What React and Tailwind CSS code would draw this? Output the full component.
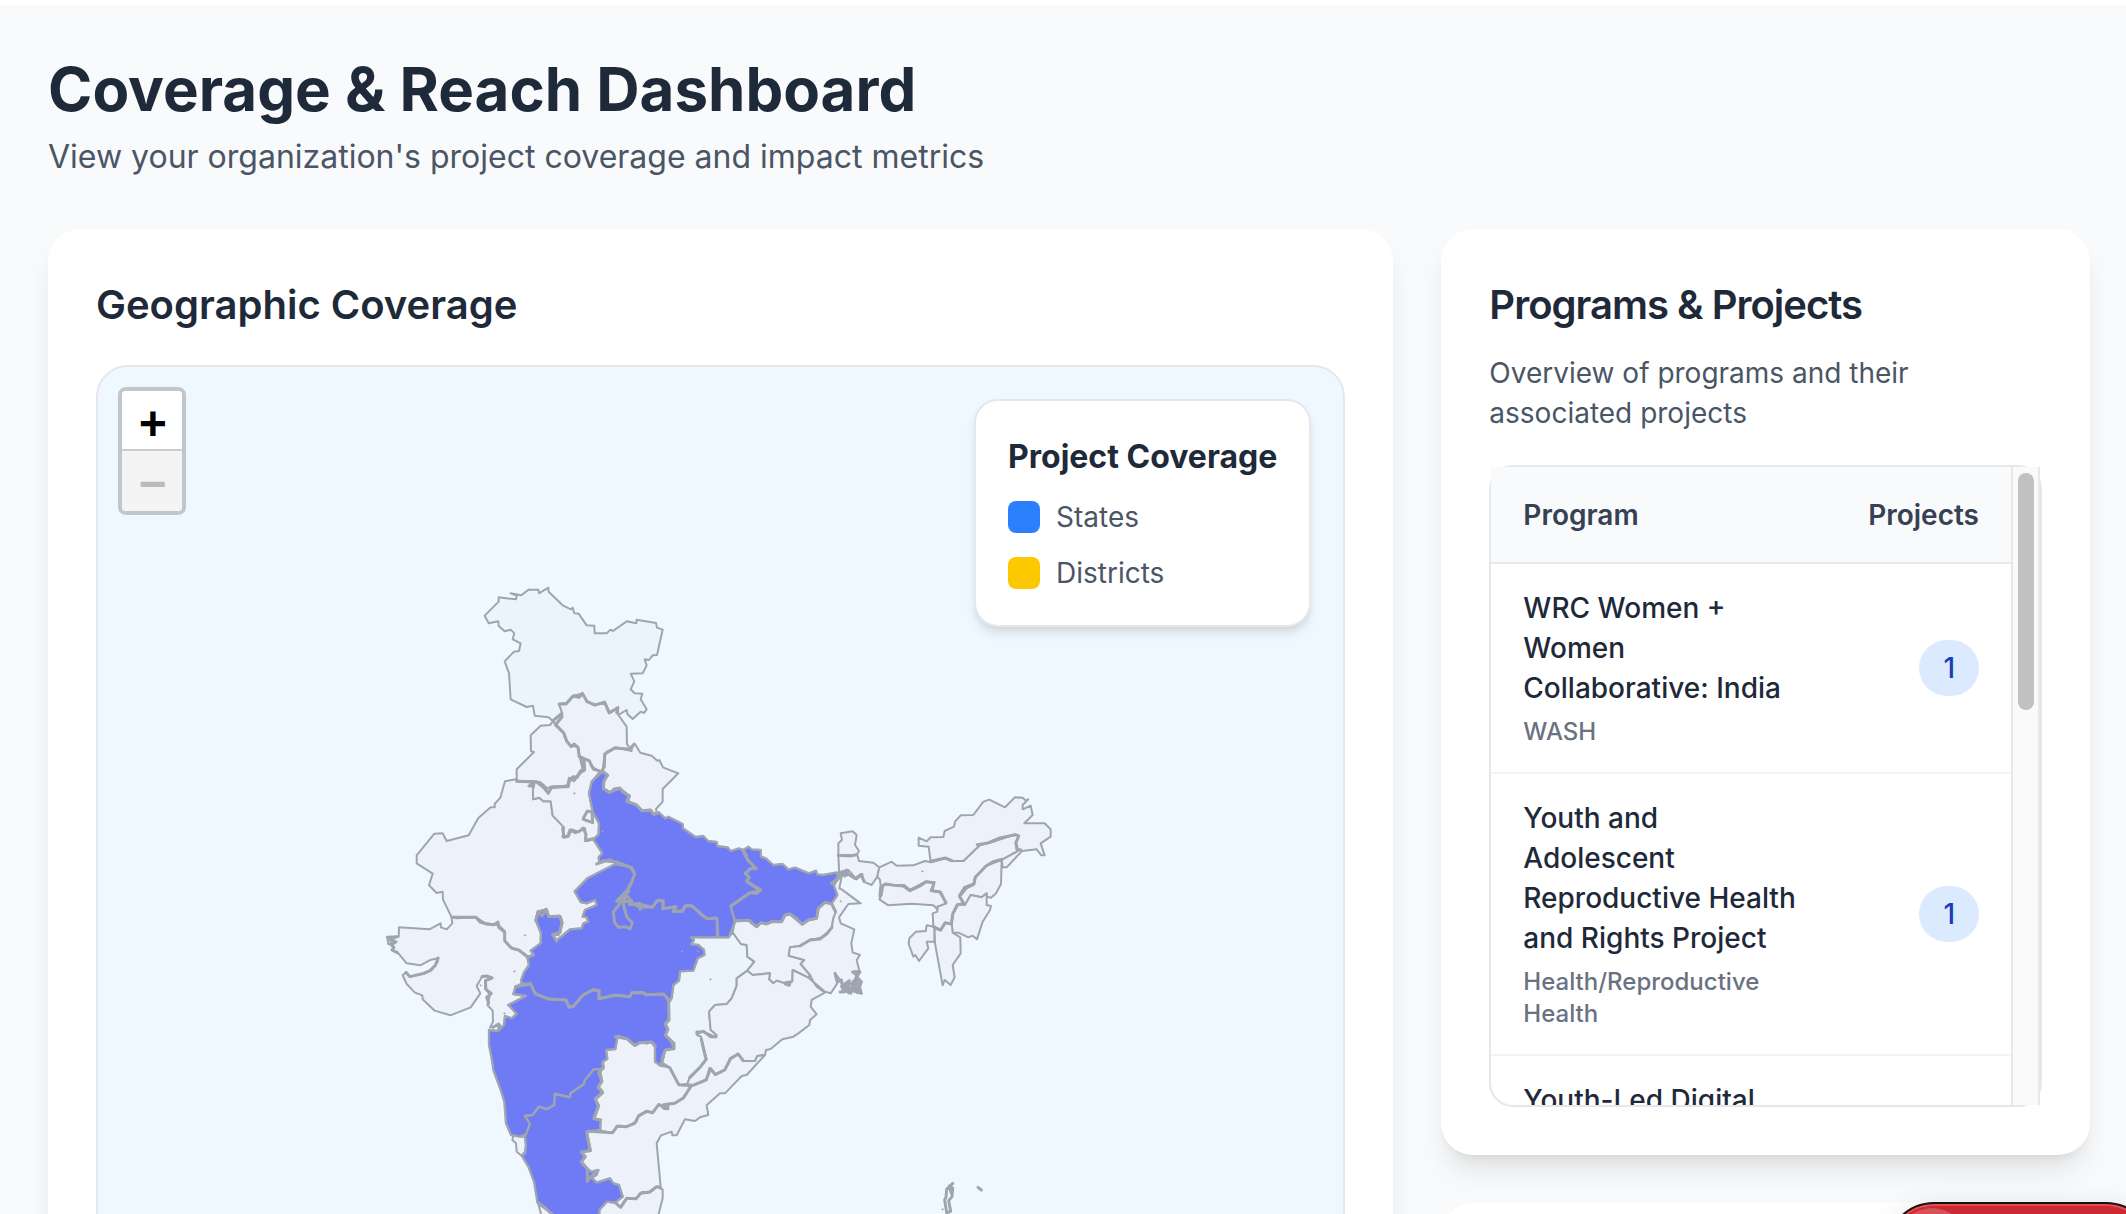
import { useState } from 'react'
import clsx from 'clsx'

// Every outline is drawn in its own sheet; `at` places that sheet on the map
const NORTH = [270, 0]
const WEST = [0, 510]
const CENTRE = [570, 510]
const EAST = [1350, 630]
const SOUTH = [300, 1230]
const ISLANDS = [1590, 1590]

const STATES = [
  { id: 'jammu-kashmir', at: NORTH, tint: true, points: '74,137 116,95 116,82 168,88 170,77 152,70 184,76 206,59 235,59 237,70 265,53 266,65 308,106 333,118 338,113 343,130 356,131 380,166 403,167 404,190 440,190 451,179 459,183 500,154 529,160 530,149 588,159 591,173 608,179 591,255 578,256 567,270 554,268 560,286 548,310 512,311 523,334 512,358 524,370 547,371 542,388 560,418 552,429 542,425 518,447 502,432 500,420 473,436 474,413 449,430 434,395 404,406 381,393 367,372 339,377 318,400 297,402 307,430 279,454 266,442 224,437 219,407 200,411 152,388 147,310 134,274 162,245 177,243 182,220 158,208 163,190 152,179 134,184 116,168 115,154 86,160' },
  { id: 'himachal', at: NORTH, points: '297,402 318,400 339,377 367,372 381,393 404,406 434,395 449,430 474,413 473,432 500,470 501,522 513,540 465,535 440,545 434,555 431,595 424,605 400,595 388,575 370,565 358,558 354,530 330,527 312,498 312,488 288,465 304,445 307,430' },
  { id: 'punjab', at: NORTH, points: '279,454 270,465 242,467 212,496 213,544 222,546 170,598 170,633 240,636 262,655 273,650 322,650 328,628 350,620 362,600 372,600 374,590 370,565 358,558 354,530 330,527 312,498 312,488 288,465' },
  { id: 'rajasthan', at: WEST, points: '440,117 405,124 391,173 374,192 374,202 362,202 325,234 296,286 230,303 218,280 193,281 140,346 140,370 188,401 177,436 200,459 218,455 219,479 244,530 260,535 318,532 345,550 385,555 405,575 405,603 425,625 450,632 475,650 492,645 482,632 512,610 513,580 497,540 503,515 530,508 537,530 572,530 577,550 565,585 548,583 558,603 600,568 635,565 640,550 655,545 650,532 638,530 645,510 680,495 675,480 650,490 632,486 614,454 652,415 735,375 735,362 686,352 697,340 670,298 650,303 645,265 625,275 605,268 595,290 578,290 582,262 548,227 542,184 520,184 508,173 489,178 489,140 500,125 440,122' },
  { id: 'haryana', at: WEST, points: '440,122 500,125 520,135 535,158 548,140 595,142 600,115 620,110 640,90 632,52 658,62 665,80 690,95 665,125 657,160 668,215 687,250 686,283 670,298 650,303 645,265 625,275 605,268 595,290 578,290 582,262 548,227 542,184 520,184 508,173 489,178 489,140 475,138 490,128' },
  { id: 'gujarat', at: WEST, points: '244,530 247,550 230,568 213,562 212,550 178,568 87,562 86,590 52,592 55,612 68,608 70,632 85,640 110,670 151,676 183,659 205,655 203,665 185,690 160,702 118,710 108,697 98,706 110,732 135,758 157,766 158,778 194,812 241,826 302,802 331,760 320,738 338,707 367,713 345,722 345,745 360,765 352,795 368,812 369,845 360,863 385,855 385,873 402,855 405,828 425,835 440,822 435,805 415,795 468,768 430,762 437,740 458,735 453,722 462,697 477,675 472,652 450,632 425,625 405,603 405,575 385,555 345,550 318,532 260,535' },
  { id: 'chhattisgarh', at: SOUTH, tint: true, points: '605,55 610,15 627,2 630,-26 670,-28 683,-65 703,-75 702,-90 685,-105 663,-107 672,-120 663,-128 776,-128 788,-143 813,-108 830,-105 832,-70 853,-55 832,-28 800,-5 800,18 785,55 770,72 735,75 717,95 722,150 740,165 738,172 700,155 680,155 682,165 693,170 710,238 690,262 660,290 652,312 628,315 610,285 598,262 570,257 580,235 585,210 612,205 600,180 587,165 593,145 585,130 597,120 595,70' },
  { id: 'uttarakhand', at: CENTRE, points: '128,92 133,50 140,38 165,22 215,33 213,20 225,12 241,38 275,47 292,62 298,60 309,82 355,100 308,147 308,185 288,207 290,220 280,222 272,210 245,212 232,197 205,185 208,168 180,145 150,157 130,145 132,122 144,105' },
  { id: 'jharkhand', at: CENTRE, points: '525,543 567,540 590,560 603,548 620,552 635,545 665,545 675,525 690,522 705,530 727,553 745,540 770,535 775,505 795,487 815,490 828,515 820,535 815,565 800,580 780,595 750,600 720,618 690,622 686,647 733,660 722,672 750,705 745,713 698,690 697,725 680,732 650,722 640,730 627,718 630,700 578,705 562,692 583,665 562,650 560,615 543,612 518,577' },
  { id: 'odisha', at: SOUTH, points: '800,-5 832,-28 848,-15 900,-20 897,-2 910,10 920,2 950,12 967,5 968,-30 1015,-7 1030,5 1040,20 1065,38 1025,60 1022,80 1040,103 1020,120 1018,135 985,160 970,170 937,178 902,207 888,210 885,225 862,228 855,243 818,243 805,222 780,235 765,270 735,283 718,265 710,300 665,318 652,312 660,290 690,262 710,238 693,170 682,165 680,155 700,155 738,172 740,165 722,150 717,95 735,75 770,72 785,55 800,18' },
  { id: 'west-bengal', at: EAST, points: '55,225 112,225 117,243 160,248 178,262 172,290 155,315 130,305 127,282 110,298 85,270 65,290 58,325 65,328 122,370 85,372 57,412 62,430 103,448 94,490 98,517 120,525 110,540 118,572 98,575 112,590 125,605 108,620 125,640 95,625 85,640 65,605 45,580 52,610 32,640 15,635 -20,605 -30,585 -58,552 -47,540 -94,527 -90,502 -60,498 -30,480 0,475 20,460 35,445 40,415 48,395 35,370 52,345 40,320 58,290' },
  { id: 'sikkim', at: EAST, points: '55,225 55,190 66,180 62,160 98,154 110,165 105,195 117,213 110,225' },
  { id: 'assam', at: EAST, points: '178,262 215,245 230,257 280,256 315,243 332,247 375,235 395,243 430,243 480,195 520,185 585,163 597,167 587,190 590,208 603,208 545,240 500,257 465,292 460,315 440,325 420,350 430,370 415,372 400,400 395,432 375,428 362,452 348,445 340,437 338,400 352,395 352,380 378,370 362,335 332,333 343,307 318,305 270,330 252,315 190,315 185,345 180,300 172,290' },
  { id: 'arunachal', at: EAST, points: '332,247 326,200 296,197 296,173 320,184 332,172 370,171 374,153 402,140 405,125 422,106 460,105 490,65 508,59 555,82 585,52 608,53 618,62 625,58 608,75 608,88 632,77 638,105 613,130 674,130 692,148 692,170 662,190 674,226 664,226 650,208 606,213 560,262 548,262 545,240 603,208 590,208 587,190 597,167 585,163 520,185 480,195 430,243 395,243 375,235' },
  { id: 'nagaland', at: EAST, points: '545,240 543,312 528,340 513,353 500,350 500,340 485,352 452,345 435,375 420,350 440,325 460,315 465,292 500,257' },
  { id: 'manipur', at: EAST, points: '452,345 485,352 500,340 500,375 513,378 510,390 488,425 471,478 458,467 445,472 415,458 398,458 395,432 400,400 415,372 435,375' },
  { id: 'mizoram', at: EAST, points: '343,445 362,452 375,428 395,432 398,458 421,472 422,520 398,555 404,592 392,615 374,600 368,616 345,490' },
  { id: 'tripura', at: EAST, points: '343,440 320,436 317,453 288,455 268,475 266,492 280,530 286,525 297,543 325,505 320,485 343,485' },
  { id: 'meghalaya', at: EAST, points: '185,345 178,358 205,376 275,371 340,376 352,388 352,380 378,370 362,335 332,333 343,307 318,305 270,330 252,315 190,315' },
  { id: 'telangana', at: SOUTH, points: '443,168 470,175 495,197 510,187 530,190 545,185 555,195 555,245 570,257 598,262 610,285 628,315 665,318 640,355 615,370 595,372 595,387 582,387 567,372 548,398 530,393 505,407 500,425 470,440 440,440 428,458 392,453 390,420 370,415 385,375 375,355 398,335 385,320 395,300 390,268 400,262 398,245 412,237 408,210 436,207' },
  { id: 'andhra', at: SOUTH, points: '665,318 710,300 718,265 735,283 765,270 780,235 805,222 818,243 855,243 862,228 885,225 830,285 815,288 765,340 750,340 710,376 715,405 690,412 675,423 645,418 620,466 607,466 605,455 573,466 560,490 572,620 560,620 535,638 515,637 498,657 470,655 450,682 435,668 458,650 447,615 430,610 420,595 380,608 365,593 360,603 350,603 345,575 350,565 333,545 345,530 335,515 362,512 350,455 392,453 428,458 440,440 470,440 500,425 505,407 530,393 548,398 567,372 582,387 595,387 595,372 615,370 640,355' },
  { id: 'goa', at: SOUTH, points: '130,465 150,470 165,470 168,495 165,515 155,527 140,515 138,490 127,480' },
  { id: 'kerala', at: SOUTH, points: '205,672 225,685 245,700 290,760 320,860 350,940 340,1050 300,960 250,800 215,710' },
  { id: 'tamil-nadu', at: SOUTH, points: '388,690 410,665 435,668 450,682 470,655 498,657 515,637 535,638 560,620 578,628 578,655 565,705 570,780 540,880 470,940 440,1020 350,1060 340,1050 350,940 320,860 290,760 388,720' },
  { id: 'uttar-pradesh', at: CENTRE, covered: true, points: '128,95 144,105 132,122 130,145 150,157 180,145 208,168 205,185 232,197 245,212 272,210 280,222 297,218 316,235 325,230 368,252 369,265 407,291 430,288 445,303 470,306 472,318 503,322 512,333 537,325 550,330 560,345 562,360 590,385 572,385 555,400 567,410 560,425 600,452 570,457 512,498 525,545 515,570 506,592 475,592 471,535 440,535 395,497 375,497 365,514 340,515 345,500 310,505 308,482 295,480 275,502 240,502 215,490 205,470 172,480 207,455 205,440 215,425 224,400 215,382 165,368 150,358 118,370 116,352 127,340 100,298 116,283 117,250 98,215 87,160 95,125' },
  { id: 'madhya-pradesh', at: CENTRE, covered: true, points: '165,372 82,415 44,454 62,486 80,490 105,480 110,495 75,510 68,530 80,532 85,545 70,550 65,565 30,568 -12,603 -22,583 -5,585 7,550 2,530 -33,530 -40,508 -67,515 -73,540 -57,580 -58,610 -88,632 -78,645 -98,652 -93,675 -108,697 -117,722 -112,735 -90,730 -75,760 -35,778 18,780 27,800 40,800 70,765 100,748 118,752 115,775 165,765 210,770 215,758 245,758 255,765 310,765 325,780 335,775 340,735 357,722 360,694 400,692 413,655 433,645 432,630 415,615 393,613 402,600 393,592 471,592 471,535 440,535 395,497 375,497 365,514 340,515 345,500 310,505 308,482 295,480 275,502 240,502 215,490 205,470 172,480 207,455 205,440 215,425 224,400 215,382' },
  { id: 'bihar', at: CENTRE, covered: true, points: '550,330 565,320 575,328 602,330 603,350 618,355 640,375 668,372 685,388 705,383 747,400 768,392 772,403 790,405 830,397 840,412 820,432 832,465 815,490 795,487 775,505 770,535 745,540 727,553 705,530 690,522 675,525 665,545 635,545 620,552 603,548 590,560 567,540 525,543 512,498 570,457 600,452 560,425 567,410 555,400 572,385 590,385 562,360 560,345' },
  { id: 'maharashtra', at: SOUTH, covered: true, points: '153,12 180,10 195,40 235,58 288,60 297,80 310,80 340,45 370,28 388,32 385,55 435,45 480,50 485,38 515,36 525,45 580,42 595,62 597,120 585,130 593,145 587,165 600,180 612,205 585,210 580,235 570,255 555,245 555,195 545,185 530,190 510,187 495,197 470,175 443,168 436,207 408,210 412,237 398,245 400,262 390,268 372,268 345,300 342,312 302,340 300,352 255,342 253,375 230,388 207,380 188,405 165,408 180,432 170,462 150,470 123,465 108,430 103,365 92,330 70,270 65,235 57,195 57,150 85,153 102,135 105,108 125,115 140,102 115,75 168,48 130,42 137,20' },
  { id: 'karnataka', at: SOUTH, covered: true, points: '165,408 188,405 207,380 230,388 253,375 255,342 300,352 302,340 342,312 345,300 372,268 390,268 395,300 385,320 398,335 375,355 385,375 370,415 392,420 390,450 350,455 362,512 335,515 345,530 333,545 350,565 365,575 385,570 380,585 365,593 380,608 420,595 430,610 447,615 458,650 435,668 410,665 388,690 388,720 290,760 245,700 225,685 202,665 192,605 175,560 155,527 165,520 168,495 165,470 180,432' },
]

const HEAVY_BORDERS = [
  { at: NORTH, points: '297,402 318,402 339,379 358,382 367,370 375,384 381,395 404,405 434,397 447,428 462,420 474,413 470,428' },
  { at: NORTH, points: '279,452 305,430 306,440 286,464 312,490 320,514 334,530 342,522 354,532 358,560 372,568 374,600 362,604 352,622 340,620 326,634 324,646 312,650 273,652' },
  { at: NORTH, points: '358,560 388,573 400,597 424,605 433,590 434,552 465,534 512,538 522,522' },
  { at: WEST, points: '440,124 500,126 520,142 535,160 545,142 595,138 598,115 612,122 628,100 640,92 632,56' },
  { at: WEST, points: '478,138 492,130 490,142' },
  { at: WEST, points: '578,265 582,292 594,288 600,270 616,278 628,274 640,264 648,284 646,302 668,296' },
  { at: WEST, points: '640,235 652,213 666,216 668,248 640,238' },
  { at: WEST, points: '248,532 318,532 330,546 350,552 372,554 384,546 386,562 404,576 404,602 424,624 446,630 474,652 490,645' },
  { at: WEST, points: '497,542 506,514 516,528 528,508 536,530 568,528 576,546 570,578 548,584 560,604' },
  { at: WEST, points: '680,372 700,362 740,366 782,382 794,402 784,430 774,448 740,484 764,486 784,480' },
  { at: WEST, points: '52,592 82,590 60,600 78,606 62,614 72,622 66,630 82,638' },
  { at: WEST, points: '108,697 120,710 160,700 180,692 196,676 204,654' },
  { at: WEST, points: '336,710 350,708 366,714 346,722 348,748 364,760 350,772 356,790' },
  { at: WEST, points: '370,862 386,852 392,862 384,872' },
  { at: CENTRE, points: '130,96 142,106 132,124 130,146 150,158 164,146 180,144 188,156 208,168 200,184 228,194 246,212 272,210 282,224 296,218' },
  { at: CENTRE, points: '548,330 562,358 588,386 572,386 556,400 568,412 560,424 602,450 590,460 570,458 514,498' },
  { at: CENTRE, points: '172,482 200,466 190,484 216,484 208,494 240,490 240,508 246,494 278,502 290,482 310,482 308,506 348,500 340,514 368,514 376,498 396,498 424,524 442,536 468,534' },
  { at: CENTRE, points: '190,492 200,530 217,548 210,567 196,560 176,562 164,548 160,516 180,490' },
  { at: CENTRE, points: '525,543 567,541 576,550 590,560 603,548 620,552 635,545 665,545 675,525 690,522 705,534 727,553 745,540 770,535 775,505 795,487 815,492 826,514' },
  { at: CENTRE, points: '815,430 834,414 832,400 850,394 854,408 862,404' },
  { at: CENTRE, points: '816,562 800,582 780,597 750,600 720,618' },
  { at: CENTRE, points: '676,728 690,726 688,736 676,732' },
  { at: SOUTH, points: '137,20 182,12 196,42 235,56 288,60 297,82 308,80 340,44 370,30 386,32 388,56 435,46 480,50 486,38 522,38 526,44 580,42 600,62' },
  { at: SOUTH, points: '596,66 597,120 586,132 594,148 586,166 612,190 612,206 586,210 578,228 576,250 600,264 626,314 668,316 708,300 722,266 736,284 764,270 782,236 804,222 820,242' },
  { at: SOUTH, points: '436,170 470,176 494,196 510,188 544,186 556,200' },
  { at: SOUTH, points: '398,246 400,264 386,278 396,304 384,322 398,338 376,358 386,378 372,416 392,420' },
  { at: SOUTH, points: '350,456 360,512 334,516 346,530 334,546 352,566 352,604 362,590 384,572' },
  { at: SOUTH, points: '662,320 640,354 614,370 580,374 592,386 566,374 548,398 530,394 506,408 494,430 470,440 442,438 428,458 356,454' },
  { at: SOUTH, points: '436,668 452,682 470,655 498,656 512,640 540,636 560,620 572,624' },
  { at: SOUTH, points: '680,160 700,154 722,170 738,170' },
  { at: SOUTH, points: '660,292 690,262 708,238 694,178' },
  { at: SOUTH, points: '202,666 226,684 246,702' },
  { at: EAST, points: '55,226 90,228 110,224' },
  { at: EAST, points: '62,285 80,270 84,282 106,296 122,284 132,302' },
  { at: EAST, points: '180,348 182,322 196,312 222,316 250,318 270,332 300,318 318,305 342,308 336,332 360,336 378,368' },
  { at: EAST, points: '472,194 500,190 540,174 586,164 596,168 588,188 592,208' },
  { at: EAST, points: '332,244 376,234 396,242' },
  { at: EAST, points: '544,238 522,244 498,258 466,292 462,312 434,322 418,348 432,372 412,374 398,402 394,432 376,428 362,450 340,440' },
  { at: EAST, points: '45,580 52,606 64,600 70,636 84,612 92,640 100,604 112,638 124,606 106,596 120,576 98,576 112,586 98,622 116,612 124,640 76,626 88,602 64,620' },
  { at: EAST, points: '74,618 110,604 118,630 60,636' },
  { at: ISLANDS, points: '158,250 140,268 138,292 134,300 140,338 152,334 146,302 156,290 158,264 148,258 154,280' },
  { at: ISLANDS, points: '234,262 244,270' },
]

const SPECKS = [
  [984, 1144], [613, 670], [697, 784], [465, 1096], [433, 1204], [403, 1330], [332, 1246],
  [936, 1144], [1021, 1228], [1657, 904], [1412, 994], [1718, 1918],
]

const PROGRAMS = [
  { name: 'WRC Women + Women Collaborative: India', category: 'WASH', projects: 1 },
  { name: 'Youth and Adolescent Reproductive Health and Rights Project', category: 'Health/Reproductive Health', projects: 1 },
  { name: 'Youth-Led Digital' },
]

const LEGEND = [
  { label: 'States', color: 'bg-[#2b7fff]' },
  { label: 'Districts', color: 'bg-[#fcc800]' },
]

function move([x, y]) {
  return `translate(${x} ${y})`
}

function IndiaMap() {
  return (
    <svg viewBox="-816 -609 3736 3400" className="block w-full" role="img" aria-label="Map of covered states">
      <g strokeLinejoin="round" strokeLinecap="round" stroke="#9ea5b1">
        {STATES.map(s => (
          <polygon
            key={s.id}
            points={s.points}
            transform={move(s.at)}
            fill={s.covered ? '#6f7af5' : s.tint ? '#ecf4fb' : '#edf1f9'}
            strokeWidth={s.covered ? 7 : 6}
          />
        ))}
        {HEAVY_BORDERS.map((b, i) => (
          <polyline key={i} points={b.points} transform={move(b.at)} fill="none" strokeWidth="9" />
        ))}
        {SPECKS.map(([x, y]) => (
          <circle key={`${x}-${y}`} cx={x} cy={y} r="2" strokeWidth="2" fill="#9ca3af" />
        ))}
      </g>
    </svg>
  )
}

function ZoomControl() {
  const [zoom, setZoom] = useState(0)

  return (
    <div className="absolute top-5 left-5 rounded-lg border-4 border-black/20 bg-clip-padding font-['Liberation_Mono',monospace] text-5xl leading-[72px] font-bold">
      <button
        aria-label="Zoom in"
        onClick={() => setZoom(zoom + 1)}
        className="block h-15 w-15 rounded-t-sm border-b-2 border-[#cccccc] bg-white pl-0.5 text-center text-black"
      >
        +
      </button>
      <button
        aria-label="Zoom out"
        disabled={zoom === 0}
        onClick={() => setZoom(zoom - 1)}
        className="block h-15 w-15 rounded-b-sm bg-[#f4f4f4] pl-0.5 text-center text-[#bbbbbb]"
      >
        −
      </button>
    </div>
  )
}

function Legend() {
  return (
    <div className="absolute top-8 right-8 rounded-3xl border-2 border-gray-200 bg-white p-8 shadow-[0_8px_12px_-2px_rgba(0,0,0,0.1),0_4px_8px_-4px_rgba(0,0,0,0.1)]">
      <h3 className="mb-4 text-[32px] leading-12 font-bold">Project Coverage</h3>
      <ul className="space-y-4">
        {LEGEND.map(item => (
          <li key={item.label} className="flex items-center gap-4">
            <span className={clsx('h-8 w-8 rounded-lg', item.color)} />
            <span className="text-[28px] leading-10 text-gray-600">{item.label}</span>
          </li>
        ))}
      </ul>
    </div>
  )
}

function Card({ className, children }) {
  return (
    <section
      className={clsx(
        'rounded-[32px] bg-white p-12 shadow-[0_20px_30px_-6px_rgba(0,0,0,0.1),0_8px_12px_-8px_rgba(0,0,0,0.1)]',
        className
      )}
    >
      {children}
    </section>
  )
}

function ProgramTable() {
  return (
    <div className="mt-8 flex h-[642px] rounded-3xl border-2 border-gray-200">
      <div className="min-w-0 flex-1 overflow-hidden">
        <table className="w-full border-separate border-spacing-0 text-[28px] leading-10">
          <thead>
            <tr className="h-[97px] bg-gray-50 text-gray-700">
              <th className="border-b-2 border-gray-200 px-8 text-left font-semibold">Program</th>
              <th className="border-b-2 border-gray-200 px-8 text-right font-semibold">Projects</th>
            </tr>
          </thead>
          <tbody>
            {PROGRAMS.map(p => (
              <tr key={p.name}>
                <td className="border-b-2 border-gray-100 py-6 pl-8">
                  <p className="max-w-[280px] font-medium">{p.name}</p>
                  {p.category && (
                    <p className="mt-2 max-w-[280px] text-2xl leading-8 font-medium text-gray-500">{p.category}</p>
                  )}
                </td>
                <td className="border-b-2 border-gray-100 pr-8 text-right">
                  {p.projects && (
                    <span className="inline-block rounded-full bg-blue-100 px-6 py-2 align-middle font-medium text-blue-800">
                      {p.projects}
                    </span>
                  )}
                </td>
              </tr>
            ))}
          </tbody>
        </table>
      </div>

      {/* Scroll track */}
      <div className="w-[29px] shrink-0 border-x-2 border-[#e8e8e8] bg-[#fafafa] pt-1.5 pr-1 pl-[5px]">
        <div className="h-[237px] rounded-full bg-[#c1c1c1]" />
      </div>
    </div>
  )
}

export default function App() {
  return (
    <div className="relative h-screen overflow-hidden border-t-[5px] border-white bg-gray-50 font-[Inter,sans-serif] text-gray-800">
      <main className="pt-12 pr-9 pl-12">
        <header className="mb-12">
          <h1 className="text-6xl leading-[72px] font-bold">Coverage &amp; Reach Dashboard</h1>
          <p className="mt-2 text-[32px] leading-12 text-gray-600">
            View your organization&apos;s project coverage and impact metrics
          </p>
        </header>

        <div className="grid grid-cols-3 items-start gap-12">
          <Card className="col-span-2">
            <h2 className="mb-8 text-[40px] leading-14 font-semibold">Geographic Coverage</h2>
            <div className="relative overflow-hidden rounded-[32px] border-2 border-gray-200 bg-[#f0f8ff]">
              <IndiaMap />
              <ZoomControl />
              <Legend />
            </div>
          </Card>

          <div className="space-y-12">
            <Card>
              <h2 className="text-[40px] leading-14 font-semibold tracking-tight">Programs &amp; Projects</h2>
              <p className="mt-5 text-[28px] leading-10 text-gray-600">
                Overview of programs and their associated projects
              </p>
              <ProgramTable />
            </Card>
            <Card />
          </div>
        </div>
      </main>

      {/* Floating action, mostly below the fold */}
      <button
        aria-label="Open panel"
        className="fixed -right-7 -bottom-21 h-24 w-[268px] overflow-hidden rounded-full border-2 border-[#141414] bg-[#c9292f] shadow-[inset_0_2px_0_#e84b4f,0_0_24px_rgba(0,0,0,0.08)]"
      >
        <span className="absolute top-1 left-2 h-18 w-18 rounded-full bg-white/20" />
      </button>
    </div>
  )
}
